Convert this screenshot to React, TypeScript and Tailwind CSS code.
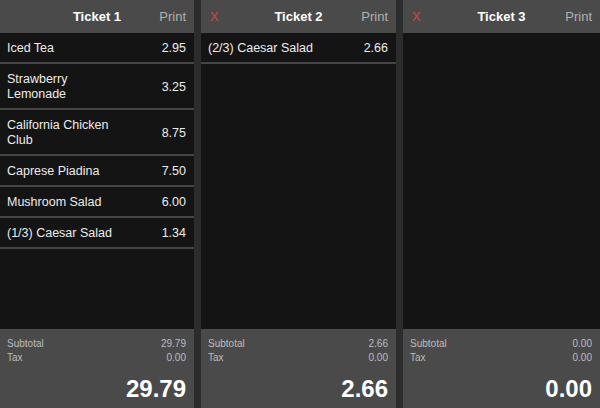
import React from "react";

type Item = { name: React.ReactNode; price: string };

const tickets: {
  title: string;
  closable: boolean;
  items: Item[];
  subtotal: string;
  tax: string;
  total: string;
  width: string;
}[] = [
  {
    title: "Ticket 1",
    closable: false,
    width: "w-[194px]",
    items: [
      { name: "Iced Tea", price: "2.95" },
      { name: <>Strawberry<br />Lemonade</>, price: "3.25" },
      { name: <>California Chicken<br />Club</>, price: "8.75" },
      { name: "Caprese Piadina", price: "7.50" },
      { name: "Mushroom Salad", price: "6.00" },
      { name: "(1/3) Caesar Salad", price: "1.34" },
    ],
    subtotal: "29.79",
    tax: "0.00",
    total: "29.79",
  },
  {
    title: "Ticket 2",
    closable: true,
    width: "w-[195px]",
    items: [{ name: "(2/3) Caesar Salad", price: "2.66" }],
    subtotal: "2.66",
    tax: "0.00",
    total: "2.66",
  },
  {
    title: "Ticket 3",
    closable: true,
    width: "w-[197px]",
    items: [],
    subtotal: "0.00",
    tax: "0.00",
    total: "0.00",
  },
];

export default function App() {
  return (
    <div
      className="w-[600px] h-[408px] bg-[#2c2c2c] flex justify-between overflow-hidden"
      style={{ fontFamily: '"Liberation Sans", Arial, sans-serif' }}
    >
      {tickets.map((t) => (
        <div key={t.title} className={`${t.width} h-full flex flex-col shrink-0`}>
          <div className="h-[33px] bg-[#4a4a4a] grid grid-cols-[1fr_auto_1fr] items-center">
            <div className="pl-[9px] text-[13px] text-[#d9443f]">
              {t.closable ? "X" : ""}
            </div>
            <div className="text-[13px] font-bold text-white">{t.title}</div>
            <div className="pr-[8px] text-right text-[13px] text-[#b0b0b0]">Print</div>
          </div>
          <div className="flex-1 bg-[#141414] flex flex-col">
            {t.items.map((it, i) => (
              <div
                key={i}
                className="flex justify-between items-center pl-[7px] pr-[8px] pt-[8px] pb-[6px] leading-[15px] text-[12.5px] text-[#ececec] border-b-2 border-[#454545]"
              >
                <span>{it.name}</span>
                <span>{it.price}</span>
              </div>
            ))}
          </div>
          <div className="h-[79px] bg-[#4a4a4a] flex flex-col pl-[7px] pr-[8px] pt-[8px] pb-[7px]">
            <div className="flex justify-between text-[10px] leading-[14px] text-[#bdbdbd]">
              <span>Subtotal</span>
              <span>{t.subtotal}</span>
            </div>
            <div className="flex justify-between text-[10px] leading-[14px] text-[#bdbdbd]">
              <span>Tax</span>
              <span>{t.tax}</span>
            </div>
            <div className="mt-auto text-right text-[24px] leading-[24px] font-bold text-white">
              {t.total}
            </div>
          </div>
        </div>
      ))}
    </div>
  );
}
